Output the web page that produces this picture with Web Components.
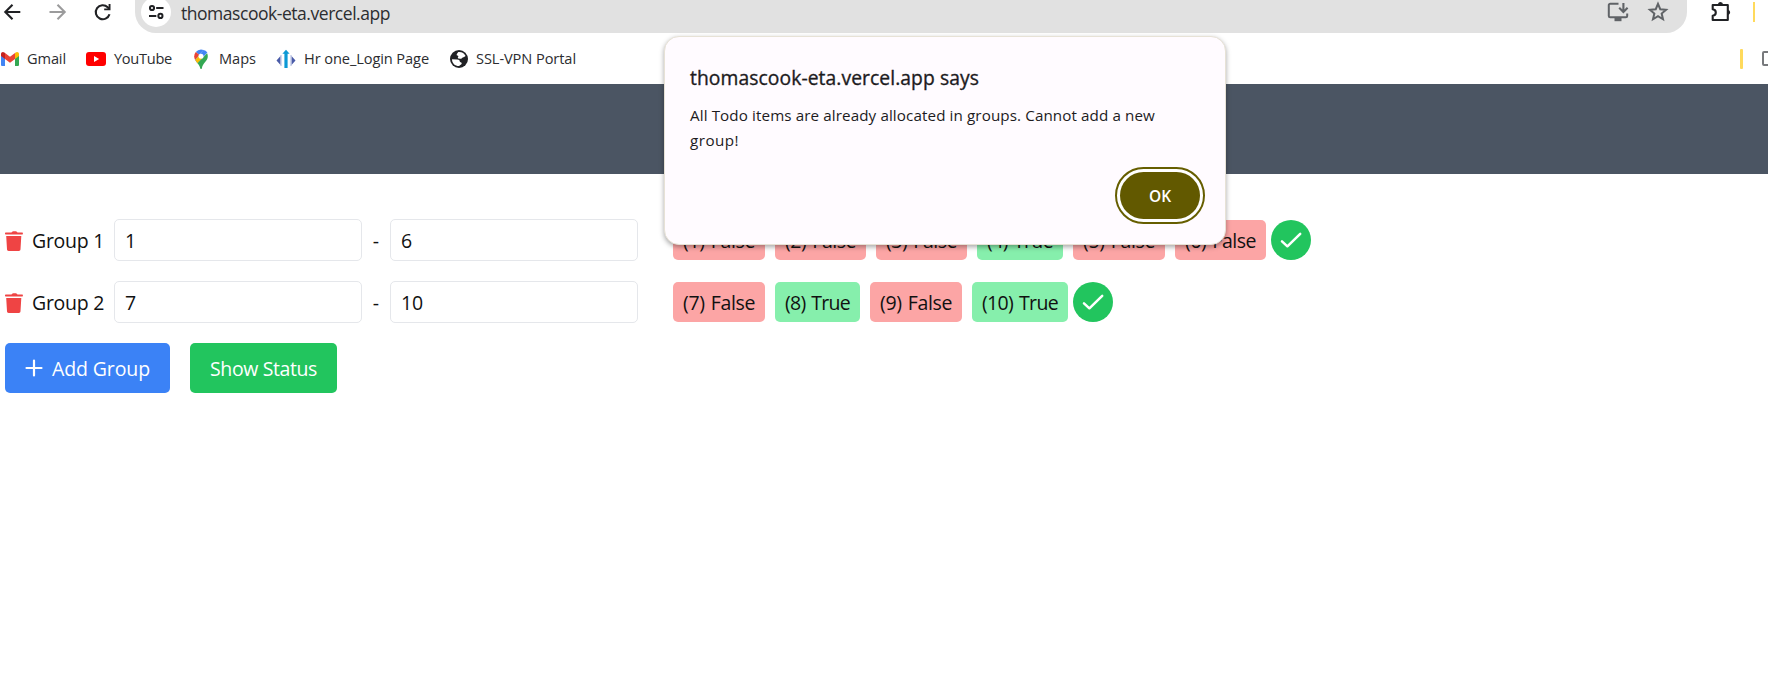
<!DOCTYPE html>
<html lang="en">
<head>
<meta charset="utf-8">
<title>Todo groups</title>
<style>
html,body{margin:0;height:100%;background:#fff;overflow:hidden}
body{font-family:"Open Sans","Noto Sans",sans-serif;color:#111}
</style>
</head>
<body>
<todo-app></todo-app>
<script>
const define = (name, html, setup) => customElements.define(name, class extends HTMLElement {
  connectedCallback() {
    if (this.shadowRoot) return;
    const t = document.createElement('template');
    t.innerHTML = typeof html === 'function' ? html(this) : html;
    this.attachShadow({mode: 'open'}).append(t.content.cloneNode(true));
    if (setup) setup(this);
  }
});

/* A single line of text whose tracking is tuned to a given advance width. */
define('fit-text', '<style>:host{display:inline-block;white-space:nowrap;flex:none}span{display:inline-block}</style><span><slot></slot></span>', el => {
  const span = el.shadowRoot.querySelector('span');
  const want = +el.getAttribute('w');
  const gap = (want - span.getBoundingClientRect().width) / el.textContent.length;
  span.style.letterSpacing = gap.toFixed(4) + 'px';
  el.style.width = want + 'px';
});

const icons = {
  back: [24, '<path d="M20.300 12H5.300M12.500 4.800 5.300 12l7.200 7.200" fill="none" stroke="#202124" stroke-width="2.100"/>'],
  forward: [24, '<path d="M4.500 12h15M12.500 4.800l7.200 7.200-7.200 7.200" fill="none" stroke="#9b9b9c" stroke-width="2.100"/>'],
  reload: [24, '<path d="M19.500 14.200A7 7 0 1 1 17.700 7.200l1.500 1.600" fill="none" stroke="#202124" stroke-width="2.100"/><path d="M20.500 4v6.300h-6.300V8.400h4.400V4z" fill="#202124"/>'],
  tune: [24, '<g fill="none" stroke="#202124" stroke-width="2.4"><circle cx="7.2" cy="7.2" r="2.500"/><circle cx="17.3" cy="16.7" r="2.500"/><path d="M12.2 7.2H21M3.6 16.7h8.8"/></g>'],
  install: [24, '<path d="M12.5 3.7H4.2a1.4 1.4 0 0 0-1.4 1.4v10.8a1.4 1.4 0 0 0 1.4 1.4h15.6a1.4 1.4 0 0 0 1.4-1.4v-2.5" fill="none" stroke="#606367" stroke-width="2"/><path d="M8.5 17.5h7v3.7h-7z" fill="#606367"/><path d="M17.4 3v8.3M13.2 7.7l4.2 4.2 4.2-4.2" fill="none" stroke="#606367" stroke-width="2.1"/>'],
  star: [24, '<path d="m12 3.8 2.25 5.4 5.85.5-4.45 3.85 1.35 5.7L12 16.2l-5 3.05 1.35-5.7L3.9 9.7l5.85-.5z" fill="none" stroke="#606367" stroke-width="2"/>'],
  puzzle: [24, '<path d="M3.7 5h15.1v15H3.7v-4.3c2-.3 3.1-1.4 3.1-3.2S5.7 9.600 3.7 9.300z" fill="none" stroke="#202124" stroke-width="2.100" stroke-linejoin="round"/><path d="M9 4.500a2.500 2.500 0 0 1 5 0zM19 9.700a2.700 2.700 0 0 1 0 5.300z" fill="#202124"/>'],
  gmail: [20, '<path d="M1 17V6l4 3v8H2a1 1 0 0 1-1-1z" fill="#4285f4"/><path d="M15 17V9l4-3v10a1 1 0 0 1-1 1z" fill="#34a853"/><path d="M1 7V5c0-2 2-2.600 3.400-1.500L5 4v6z" fill="#c5221f"/><path d="M15 10V4l.6-.5C17 2.400 19 3 19 5v2z" fill="#fbbc04"/><path d="m5 4 5 3.800L15 4v6l-5 3.800L5 10z" fill="#ea4335"/>'],
  youtube: [20, '<rect y="3" width="20" height="14" rx="3" fill="#f00"/><path d="m8 7 5.200 3L8 13z" fill="#fff"/>'],
  maps: [20, '<path d="M10 .5A6.800 6.800 0 0 0 4.800 3L8 5.700 12.600 1z" fill="#4285f4"/><path d="M4.800 3A6.600 6.600 0 0 0 3.200 7.300c0 1.600.4 2.600 1 3.700L8 6.500 8.200 5.800z" fill="#ea4335"/><path d="M12.400 1 8 6l-.8 1.500L4.200 11c.5 1 1.200 2 2.200 3.200l10-10.800A6.700 6.700 0 0 0 12.400 1z" fill="#4285f4"/><path d="M4.200 11 8 6.500l3.800 2.600-5.400 5.100C5.500 13.100 4.700 12 4.200 11z" fill="#fbbc04"/><path d="M16.100 4.200c.5.900.7 2 .7 3.100 0 5-5 6.500-5.900 12-.2 1-1.500 1-1.700 0-.4-2.200-1.500-3.600-2.800-5.100z" fill="#34a853"/><circle cx="10" cy="7.200" r="2.500" fill="#fff"/>'],
  hrone: [20, '<path d="M4.500 7v9L.5 11.500z M15.500 7v9l4-4.500z" fill="#4a5ba8"/><path d="M5 6v11M15 6v11" stroke="#a9b4dd"/><path d="M8.400 19V4.800H6.400L10 .7l3.600 4.100h-2V19z" fill="#0c99d5"/>'],
  globe: [20, '<circle cx="10" cy="10" r="9" fill="#202124"/><path d="M9.300 3c3.300-.4 6.200 1.300 7.300 4-1.500 1.700-2.800.8-3.500 2.100-.6 1.200-2 .4-3.200.4-.9 0-1.500-.9-.8-1.600.5-.6.3-1.300-.7-1.400-1.200-.1-1-1.500.9-3.500zM3 10.200l5.200.2c1.800 0 2.600.7 2.600 2 0 1.100 2.100.3 1.900 2-.1 1.200-1.700 1-2.500 2.700C6 17.200 3 14.100 3 10.200z" fill="#fff"/>'],
  trash: [20, '<path d="M1 1.500h5.500C7 .5 7.800.2 9.500.2s2.500.3 3 1.300H17c.7 0 .9.300.9 1s-.2 1-.9 1H1c-.7 0-1-.2-1-1s.3-1 1-1zM1.200 5h15.100l-.8 13.300c-.1 1.200-.6 1.700-1.700 1.700H3.700C2.600 20 2.100 19.500 2 18.300z" fill="#ef4444"/>'],
  plus: [20, '<path d="M10 2.500v15M2.500 10h15" stroke="#fff" stroke-width="2.200" stroke-linecap="round"/>'],
  check: [24, '<path d="m3 13.300 5.400 5L21.200 5.800" fill="none" stroke="#fff" stroke-width="2.500" stroke-linecap="round" stroke-linejoin="round"/>']
};
define('ui-icon', el => {
  const [box, art] = icons[el.getAttribute('name')], s = el.getAttribute('size');
  return `<style>:host{display:block;flex:none;width:${s}px;height:${s}px}svg{display:block}</style><svg width="${s}" height="${s}" viewBox="0 0 ${box} ${box}">${art}</svg>`;
});

define('browser-toolbar', `<style>
:host{display:flex;height:33px;align-items:flex-start}
.nav{display:flex;gap:21px;width:135px;box-sizing:border-box;flex:none}
.omni{width:1552px;height:33px;box-sizing:border-box;background:#e1e1e1;border-radius:0 0 21px 21px;display:flex;padding:0 17px 0 6px;overflow:hidden}
.site{width:30px;height:30px;margin-top:-3px;border-radius:50%;background:#fff;display:grid;place-items:center;margin-right:10px}
fit-text{font-size:17.500px;line-height:26px;color:#2c2d30;flex:none}
.spacer{flex:1}.end{display:flex;gap:16px}
.ext{margin-left:22px}.bar{width:2px;height:20px;margin:2px 0 0 20px;background:#ffda5c}
</style>
<div class="nav"><ui-icon name="back" size="24"></ui-icon><ui-icon name="forward" size="24"></ui-icon><ui-icon name="reload" size="24"></ui-icon></div>
<div class="omni"><div class="site"><ui-icon name="tune" size="20"></ui-icon></div><fit-text w="209">thomascook-eta.vercel.app</fit-text><div class="spacer"></div><div class="end"><ui-icon name="install" size="24"></ui-icon><ui-icon name="star" size="24"></ui-icon></div></div>
<ui-icon class="ext" name="puzzle" size="24"></ui-icon><div class="bar"></div>`);

define('bookmark-item', el => `<style>
:host{display:flex;align-items:center;font-size:14.600px;line-height:20px;color:#2c2d30}
ui-icon{margin-right:${el.getAttribute('gap')}px}
::slotted(*){margin-bottom:2px}
</style><ui-icon name="${el.getAttribute('icon')}" size="20"></ui-icon><slot></slot>`);

define('bookmark-bar', `<style>
:host{display:flex;height:51px;align-items:center;box-sizing:border-box}
.bar{width:3px;height:20px;border-radius:1px;background:#ffda5c;margin-left:auto;margin-right:19px}
.folder{width:20px;height:15px;box-sizing:border-box;border:2px solid #77797c;border-radius:2px;margin-right:-14px;flex:none}
</style>
<bookmark-item icon="gmail" gap="7"><fit-text w="39">Gmail</fit-text></bookmark-item>
<bookmark-item icon="youtube" gap="8" style="margin-left:20px"><fit-text w="58">YouTube</fit-text></bookmark-item>
<bookmark-item icon="maps" gap="8" style="margin-left:19px"><fit-text w="37">Maps</fit-text></bookmark-item>
<bookmark-item icon="hrone" gap="8" style="margin-left:20px"><fit-text w="125">Hr one_Login Page</fit-text></bookmark-item>
<bookmark-item icon="globe" gap="7" style="margin-left:20px"><fit-text w="100">SSL-VPN Portal</fit-text></bookmark-item>
<div class="bar"></div><div class="folder"></div>`);

define('status-pill', `<style>
:host{display:flex;align-items:center;height:40px;box-sizing:border-box;padding:2px 10px 0;border-radius:5px;background:#fca5a5;word-spacing:1.500px}
:host([on]){background:#86efac}
</style><slot></slot>`);

define('number-field', `<style>
:host{display:flex;align-items:center;width:248px;height:42px;box-sizing:border-box;border:1px solid #e5e7eb;border-radius:5px;padding:2px 10px 0;background:#fff;flex:none}
</style><slot></slot>`);

define('group-row', `<style>
:host{display:flex;align-items:center;height:42px;font-size:19.500px;line-height:30px;color:#111}
ui-icon{margin:1px 7px 0 5px}
.name{width:82px;flex:none;padding-top:2px}.dash{width:28px;text-align:center;flex:none;padding-top:2px}
.pills{display:flex;gap:10px;margin-left:35px}
.ok{width:40px;height:40px;border-radius:50%;background:#22c55e;margin-left:5px;display:grid;place-items:center}
.ok ui-icon{margin:0}
</style>
<ui-icon name="trash" size="20"></ui-icon><div class="name"><slot name="name"></slot></div>
<number-field><slot name="from"></slot></number-field><div class="dash">-</div><number-field><slot name="to"></slot></number-field>
<div class="pills"><slot></slot></div><div class="ok"><ui-icon name="check" size="24"></ui-icon></div>`);

define('action-button', `<style>
:host{display:flex;align-items:center;height:50px;box-sizing:border-box;padding:2px 20px 0;border-radius:5px;background:var(--fill);color:#fff;font-size:19.500px;line-height:30px}
::slotted(ui-icon){margin:-3px 8px 0 -1px}
</style><slot></slot>`);

define('alert-dialog', `<style>
:host{position:absolute;left:664px;top:36px;width:562px;height:209px;box-sizing:border-box;border:1px solid #e7e2d6;border-radius:15px;background:#fffbff;box-shadow:0 2px 5px rgba(0,0,0,.35);padding:24px 20px 20px 25px;color:#1d1b1e;display:flex;flex-direction:column}
h2{margin:0;font-size:19.300px;line-height:34px;font-weight:500;-webkit-text-stroke:.35px #1d1b1e}
p{margin:8px 0 0;font-size:15.200px;line-height:25px;display:flex;flex-direction:column;align-items:flex-start}
button{align-self:flex-end;margin:14px 0 0;width:90px;height:57px;box-sizing:border-box;border:2px solid #665e00;border-radius:29px;padding:3px;background:#fff;font:600 15.500px/20px "Open Sans","Noto Sans",sans-serif;color:#fff;flex:none}
button span{display:grid;place-items:center;height:100%;box-sizing:border-box;padding-top:1px;border-radius:25px;background:#625900}
</style><h2><slot name="title"></slot></h2><p><slot></slot></p><button><span><fit-text w="22">OK</fit-text></span></button>`);

const pill = (n, on, w) => `<status-pill${on ? ' on' : ''}><fit-text w="${w}">(${n}) ${on ? 'True' : 'False'}</fit-text></status-pill>`;
define('todo-app', `<style>
:host{display:block;position:relative;width:1768px;height:697px;overflow:hidden;background:#fff}
header{height:90px;background:#4b5563}
main{display:flex;flex-direction:column;gap:20px;padding-top:45px}
.actions{display:flex;gap:20px;padding-left:5px}
</style>
<browser-toolbar></browser-toolbar><bookmark-bar></bookmark-bar><header></header>
<main>
<group-row><fit-text slot="name" w="72">Group 1</fit-text><fit-text slot="from" w="11">1</fit-text><fit-text slot="to" w="11">6</fit-text>${pill(1,0,72)}${pill(2,0,71)}${pill(3,0,71)}${pill(4,1,66)}${pill(5,0,72)}${pill(6,0,71)}</group-row>
<group-row><fit-text slot="name" w="72">Group 2</fit-text><fit-text slot="from" w="11">7</fit-text><fit-text slot="to" w="22">10</fit-text>${pill(7,0,72)}${pill(8,1,65)}${pill(9,0,72)}${pill(10,1,76)}</group-row>
<div class="actions"><action-button style="--fill:#3b82f6"><ui-icon name="plus" size="20"></ui-icon><fit-text w="98">Add Group</fit-text></action-button><action-button style="--fill:#22c55e"><fit-text w="107">Show Status</fit-text></action-button></div>
</main>
<alert-dialog><fit-text slot="title" w="289">thomascook-eta.vercel.app says</fit-text><fit-text w="465">All Todo items are already allocated in groups. Cannot add a new</fit-text><fit-text w="49">group!</fit-text></alert-dialog>`);
</script>
</body>
</html>
